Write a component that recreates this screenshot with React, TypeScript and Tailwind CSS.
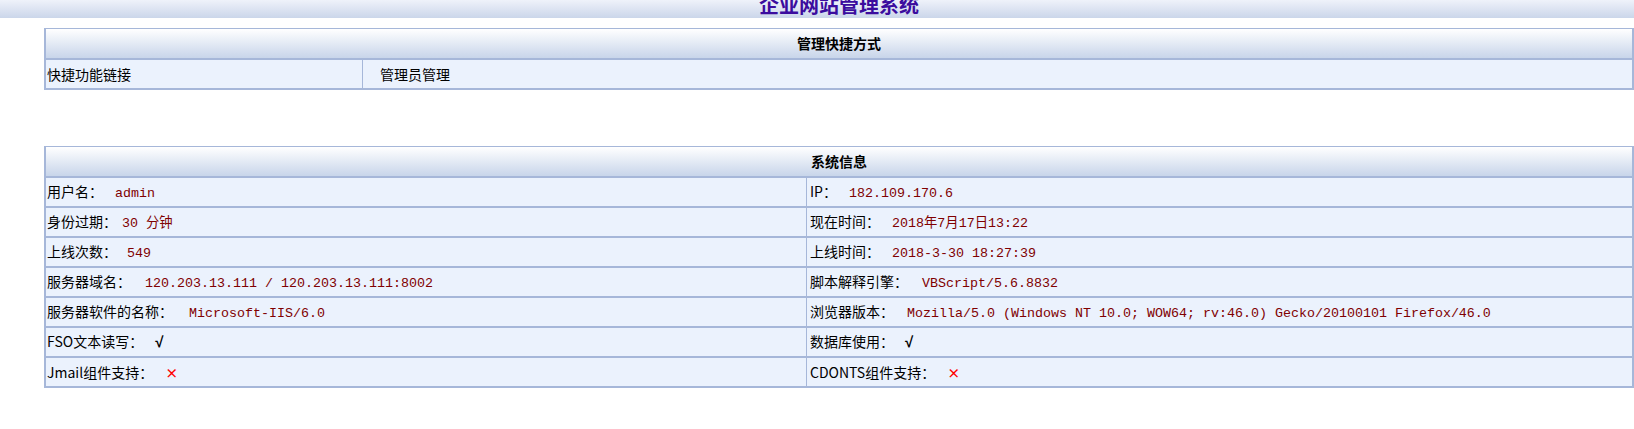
import React from "react"

type Info = {
    label: string
    value: string
    gap: number
    kind?: "text" | "ok" | "no"
}

const leftInfo: Info[] = [
    { label: "用户名：", value: "admin", gap: 12 },
    { label: "身份过期：", value: "30 分钟", gap: 5 },
    { label: "上线次数：", value: "549", gap: 10 },
    { label: "服务器域名：", value: "120.203.13.111 / 120.203.13.111:8002", gap: 14 },
    { label: "服务器软件的名称：", value: "Microsoft-IIS/6.0", gap: 16 },
    { label: "FSO文本读写：", value: "√", gap: 12, kind: "ok" },
    { label: "Jmail组件支持：", value: "×", gap: 12, kind: "no" },
]

const rightInfo: Info[] = [
    { label: "IP：", value: "182.109.170.6", gap: 12 },
    { label: "现在时间：", value: "2018年7月17日13:22", gap: 12 },
    { label: "上线时间：", value: "2018-3-30 18:27:39", gap: 12 },
    { label: "脚本解释引擎：", value: "VBScript/5.6.8832", gap: 14 },
    { label: "浏览器版本：", value: "Mozilla/5.0 (Windows NT 10.0; WOW64; rv:46.0) Gecko/20100101 Firefox/46.0", gap: 13 },
    { label: "数据库使用：", value: "√", gap: 11, kind: "ok" },
    { label: "CDONTS组件支持：", value: "×", gap: 12, kind: "no" },
]

const sans = "font-['Noto_Sans_CJK_SC','Noto_Sans',sans-serif]"

// 单元格内容
function InfoCell({ item }: { item: Info }) {
    return (
        <div className="flex items-baseline whitespace-nowrap">
            <span className="text-[14px] text-black">{item.label}</span>
            {item.kind === "ok" && (
                <span className="font-['Liberation_Sans',sans-serif] text-[15px] font-bold text-black" style={{ marginLeft: item.gap }}>{item.value}</span>
            )}
            {item.kind === "no" && (
                <span className="text-[13px] font-bold text-[#ff0000]" style={{ marginLeft: item.gap }}>{item.value}</span>
            )}
            {!item.kind && (
                <span className="font-['Liberation_Mono','Noto_Sans_CJK_SC',monospace] text-[13.33px] text-[#800000]" style={{ marginLeft: item.gap }}>
                    {item.value}
                </span>
            )}
        </div>
    )
}

function TableHead({ title }: { title: string }) {
    return (
        <div className="flex h-[31px] items-center justify-center border-b-2 border-[#a6b7d9] bg-gradient-to-b from-white to-[#c8d5ea] text-[14px] font-bold text-black">
            {title}
        </div>
    )
}

export default function App() {
    return (
        <div className={`min-h-screen bg-white ${sans}`}>
            {/* 顶部标题栏 */}
            <div className="h-[18px] overflow-hidden bg-gradient-to-b from-[#eff2fa] to-[#cbd6ea] pl-[44px]">
                <div className="-mt-[8px] text-center text-[20px] leading-[26px] font-bold text-[#3b0c9e]">企业网站管理系统</div>
            </div>

            <div className="pl-[44px] pt-[10px]">
                {/* 管理快捷方式 */}
                <div className="border-t border-l-2 border-r-2 border-[#a6b7d9]">
                    <TableHead title="管理快捷方式" />
                    <div className="flex h-[30px] border-b-2 border-[#a6b7d9] bg-[#ebf2fd] text-[14px]">
                        <div className="flex w-[317px] items-center border-r border-[#a6b7d9] pl-[1px] text-black">快捷功能链接</div>
                        <div className="flex flex-1 items-center pl-[17px] text-black">管理员管理</div>
                    </div>
                </div>

                {/* 系统信息 */}
                <div className="mt-[56px] border-t border-l-2 border-r-2 border-[#a6b7d9]">
                    <TableHead title="系统信息" />
                    {leftInfo.map((item, i) => (
                        <div key={item.label} className="flex h-[30px] border-b-2 border-[#a6b7d9] bg-[#ebf2fd]">
                            <div className="flex w-[761px] items-center border-r border-[#a6b7d9] pl-[1px]">
                                <InfoCell item={item} />
                            </div>
                            <div className="flex flex-1 items-center pl-[3px]">
                                <InfoCell item={rightInfo[i]} />
                            </div>
                        </div>
                    ))}
                </div>
            </div>
        </div>
    )
}
